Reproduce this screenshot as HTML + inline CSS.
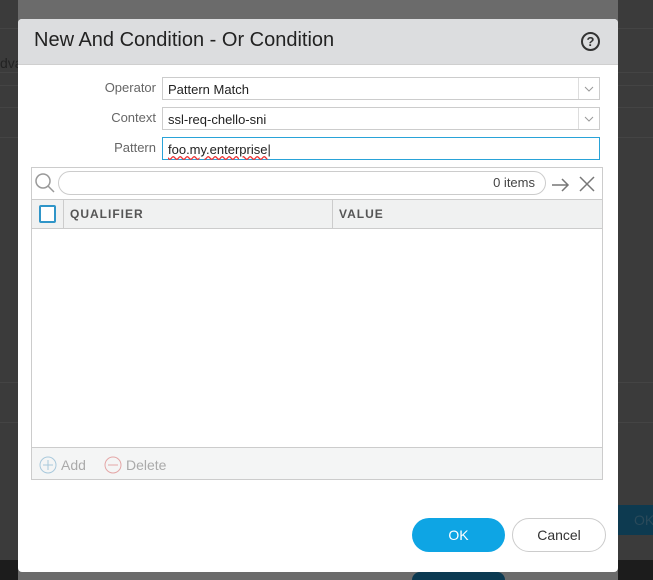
<!DOCTYPE html>
<html><head><style>
html,body{margin:0;width:653px;height:580px;overflow:hidden;}
body{background:#3b3b3b;position:relative;font-family:"Liberation Sans",sans-serif;}
.a{position:absolute;}
.lbl{color:#666;font-size:13px;text-align:right;width:138px;left:18px;}
.inp{left:162px;width:438px;height:23px;border:1px solid #ccc;background:#fff;font-size:13px;color:#222;line-height:23px;padding-left:5px;box-sizing:border-box;}
.chev{position:absolute;right:0;top:0;width:20px;height:21px;border-left:1px solid #ddd;}
.ln{position:absolute;height:1px;background:#444;}
</style></head><body>
<div class="a" style="left:0;top:560px;width:653px;height:20px;background:#1c1c1c"></div>
<div class="ln" style="left:0;top:28px;width:653px"></div>
<div class="ln" style="left:0;top:72px;width:653px"></div>
<div class="ln" style="left:0;top:85px;width:653px"></div>
<div class="ln" style="left:0;top:107px;width:653px"></div>
<div class="ln" style="left:0;top:137px;width:653px"></div>
<div class="ln" style="left:0;top:382px;width:653px"></div>
<div class="ln" style="left:0;top:422px;width:653px"></div>
<div class="a" style="left:18px;top:0;width:600px;height:580px;background:#6b6b6b"></div>
<div class="a" style="left:0;top:55px;font-size:14px;color:#222">dva</div>
<div class="a" style="left:618px;top:505px;width:35px;height:30px;background:#0d3a50"></div>
<div class="a" style="left:634px;top:512px;color:#2a4a5a;font-size:14px">OK</div>
<div class="a" style="left:412px;top:572px;width:93px;height:8px;border-radius:8px 8px 0 0;background:#0b3a52"></div>
<div class="a" style="left:18px;top:19px;width:600px;height:553px;background:#fff;border-radius:4px;overflow:hidden">
 <div class="a" style="left:0;top:0;width:600px;height:45px;background:#dcdddf;border-bottom:1px solid #cfcfcf"></div>
 <div class="a" style="left:16px;top:10px;font-size:20px;color:#222">New And Condition - Or Condition</div>
 <div class="a" style="left:563px;top:13px;width:15px;height:15px;border:2px solid #333;border-radius:50%;font-size:13px;font-weight:bold;text-align:center;line-height:15px;color:#333">?</div>
</div>
<div class="a lbl" style="top:80px">Operator</div>
<div class="a inp" style="top:77px">Pattern Match<div class="chev"><svg width="20" height="21"><path d="M6 9l4 4 4-4" fill="none" stroke="#999"/></svg></div></div>
<div class="a lbl" style="top:110px">Context</div>
<div class="a inp" style="top:107px">ssl-req-chello-sni<div class="chev"><svg width="20" height="21"><path d="M6 9l4 4 4-4" fill="none" stroke="#999"/></svg></div></div>
<div class="a lbl" style="top:140px">Pattern</div>
<div class="a inp" style="top:137px;border-color:#29a3d8"><span style="text-decoration:underline wavy #e33">foo.my.enterprise</span>|</div>
<div class="a" style="left:31px;top:167px;width:572px;height:313px;border:1px solid #ccc;box-sizing:border-box;background:#fff">
 <svg class="a" style="left:2px;top:4px" width="22" height="22"><circle cx="9" cy="9" r="7" fill="none" stroke="#999" stroke-width="1.5"/><path d="M14 14l6 6" stroke="#999" stroke-width="1.5"/></svg>
 <div class="a" style="left:26px;top:3px;width:488px;height:24px;border:1px solid #ccc;border-radius:12px;box-sizing:border-box;font-size:13px;color:#444;text-align:right;padding-right:10px;line-height:22px">0 items</div>
 <svg class="a" style="left:518px;top:6px" width="52" height="20"><path d="M2 11h16M12 5l6 6-6 6" fill="none" stroke="#777" stroke-width="1.5"/><path d="M30 3l14 14M44 3L30 17" stroke="#777" stroke-width="1.5"/></svg>
 <div class="a" style="left:0;top:31px;width:570px;height:30px;background:#f0f1f1;border-top:1px solid #ccc;border-bottom:1px solid #ccc;box-sizing:border-box"></div>
 <div class="a" style="left:31px;top:31px;width:1px;height:30px;background:#ccc"></div>
 <div class="a" style="left:300px;top:31px;width:1px;height:30px;background:#ccc"></div>
 <div class="a" style="left:7px;top:37px;width:13px;height:14px;border:2px solid #2f95c8;border-radius:2px;background:#fff"></div>
 <div class="a" style="left:38px;top:39px;font-size:12px;font-weight:bold;color:#555;letter-spacing:1px">QUALIFIER</div>
 <div class="a" style="left:307px;top:39px;font-size:12px;font-weight:bold;color:#555;letter-spacing:1px">VALUE</div>
 <div class="a" style="left:0;top:279px;width:570px;height:32px;background:#f4f5f5;border-top:1px solid #ccc;box-sizing:border-box"></div>
 <svg class="a" style="left:7px;top:288px" width="18" height="18"><circle cx="9" cy="9" r="8" fill="none" stroke="#a9c9dc"/><path d="M9 4v10M4 9h10" stroke="#a9c9dc"/></svg>
 <div class="a" style="left:29px;top:289px;font-size:14px;color:#aaa">Add</div>
 <svg class="a" style="left:72px;top:288px" width="18" height="18"><circle cx="9" cy="9" r="8" fill="none" stroke="#e4a6a6"/><path d="M4 9h10" stroke="#e4a6a6"/></svg>
 <div class="a" style="left:94px;top:289px;font-size:14px;color:#aaa">Delete</div>
</div>
<div class="a" style="left:412px;top:518px;width:93px;height:34px;border-radius:17px;background:#0ea5e4;color:#fff;font-size:14px;text-align:center;line-height:34px">OK</div>
<div class="a" style="left:512px;top:518px;width:94px;height:34px;border-radius:17px;border:1px solid #ccc;box-sizing:border-box;color:#333;font-size:14px;text-align:center;line-height:32px;background:#fff">Cancel</div>
</body></html>
